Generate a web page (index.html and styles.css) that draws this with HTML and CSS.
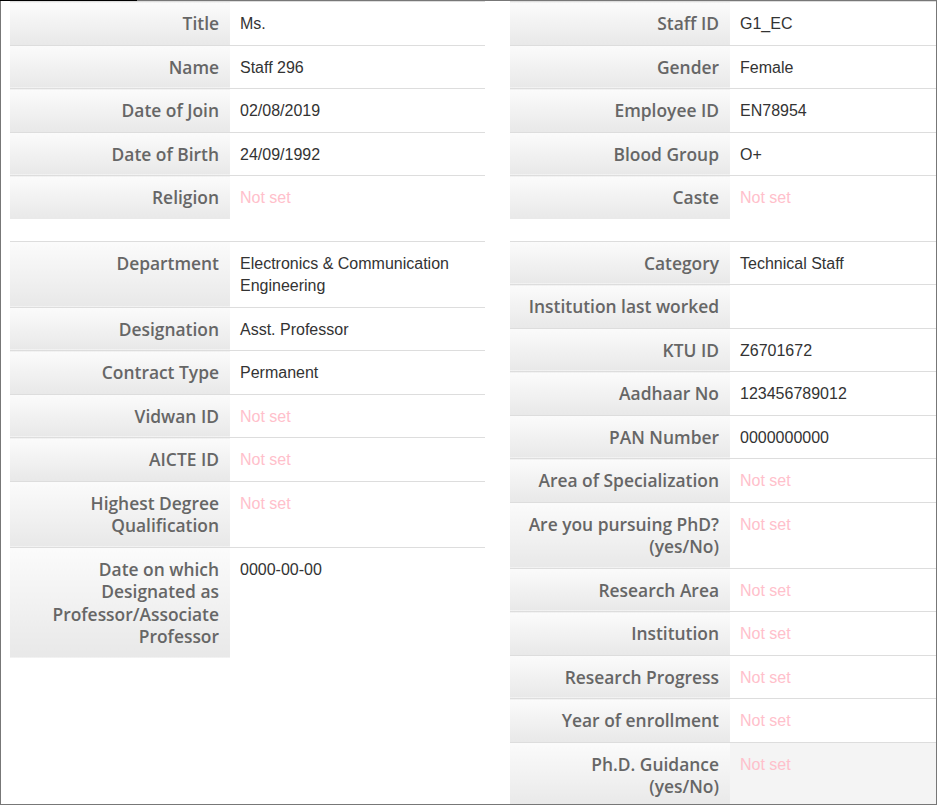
FILE: index.html
```html
<!DOCTYPE html>
<html lang="en">
<head>
<meta charset="utf-8">
<title>Staff Profile</title>
<link rel="stylesheet" href="styles.css">
</head>
<body>
<div class="topline"></div>
<div class="frame">
  <div class="cols">
    <div class="col">
      <table class="info">
        <tr><td class="label">Title</td><td class="value">Ms.</td></tr>
        <tr><td class="label">Name</td><td class="value">Staff 296</td></tr>
        <tr><td class="label">Date of Join</td><td class="value">02/08/2019</td></tr>
        <tr><td class="label">Date of Birth</td><td class="value">24/09/1992</td></tr>
        <tr><td class="label">Religion</td><td class="value notset">Not set</td></tr>
      </table>
      <table class="info">
        <tr><td class="label">Department</td><td class="value">Electronics &amp; Communication Engineering</td></tr>
        <tr><td class="label">Designation</td><td class="value">Asst. Professor</td></tr>
        <tr><td class="label">Contract Type</td><td class="value">Permanent</td></tr>
        <tr><td class="label">Vidwan ID</td><td class="value notset">Not set</td></tr>
        <tr><td class="label">AICTE ID</td><td class="value notset">Not set</td></tr>
        <tr><td class="label">Highest Degree Qualification</td><td class="value notset">Not set</td></tr>
        <tr><td class="label">Date on which Designated as Professor/Associate Professor</td><td class="value">0000-00-00</td></tr>
      </table>
    </div>
    <div class="col">
      <table class="info">
        <tr><td class="label">Staff ID</td><td class="value">G1_EC</td></tr>
        <tr><td class="label">Gender</td><td class="value">Female</td></tr>
        <tr><td class="label">Employee ID</td><td class="value">EN78954</td></tr>
        <tr><td class="label">Blood Group</td><td class="value">O+</td></tr>
        <tr><td class="label">Caste</td><td class="value notset">Not set</td></tr>
      </table>
      <table class="info">
        <tr><td class="label">Category</td><td class="value">Technical Staff</td></tr>
        <tr><td class="label">Institution last worked</td><td class="value"></td></tr>
        <tr><td class="label">KTU ID</td><td class="value">Z6701672</td></tr>
        <tr><td class="label">Aadhaar No</td><td class="value">123456789012</td></tr>
        <tr><td class="label">PAN Number</td><td class="value">0000000000</td></tr>
        <tr><td class="label">Area of Specialization</td><td class="value notset">Not set</td></tr>
        <tr><td class="label">Are you pursuing PhD? (yes/No)</td><td class="value notset">Not set</td></tr>
        <tr><td class="label">Research Area</td><td class="value notset">Not set</td></tr>
        <tr><td class="label">Institution</td><td class="value notset">Not set</td></tr>
        <tr><td class="label">Research Progress</td><td class="value notset">Not set</td></tr>
        <tr><td class="label">Year of enrollment</td><td class="value notset">Not set</td></tr>
        <tr class="hover"><td class="label">Ph.D. Guidance (yes/No)</td><td class="value notset">Not set</td></tr>
      </table>
    </div>
  </div>
</div>
</body>
</html>
```

FILE: styles.css
```css
html, body {
  margin: 0;
  padding: 0;
  background: #fff;
}

body {
  width: 937px;
  height: 805px;
  overflow: hidden;
}

.topline {
  height: 1px;
  background: linear-gradient(to right, #000 0, #000 137px, #777 137px, #777 100%);
}

.frame {
  box-sizing: border-box;
  width: 937px;
  height: 804px;
  border: 1px solid #777;
  border-top: none;
  overflow: hidden;
}

.cols {
  display: grid;
  grid-template-columns: 475px 426px;
  column-gap: 25px;
  padding-left: 9px;
  align-items: start;
}

.info {
  width: 100%;
  border-collapse: collapse;
  margin-bottom: 22px;
}

.info td {
  border-top: 1px solid #ddd;
  padding: 10px;
  vertical-align: top;
  line-height: 22.5px;
}

.label {
  width: 199px;
  padding-right: 11px !important;
  text-align: right;
  font-family: "Open Sans", "DejaVu Sans", sans-serif;
  font-weight: 600;
  font-size: 17.4px;
  color: #666;
  background: linear-gradient(to bottom, #fbfbfb 0%, #e8e8e8 100%);
}

.info td.value {
  padding-top: 11px;
  padding-bottom: 9px;
  font-family: "Liberation Sans", Arial, sans-serif;
  font-size: 16px;
  color: #333;
}

.info td.notset {
  color: #ffc0cb;
}

.hover .value {
  background: #f4f4f4;
}
```
